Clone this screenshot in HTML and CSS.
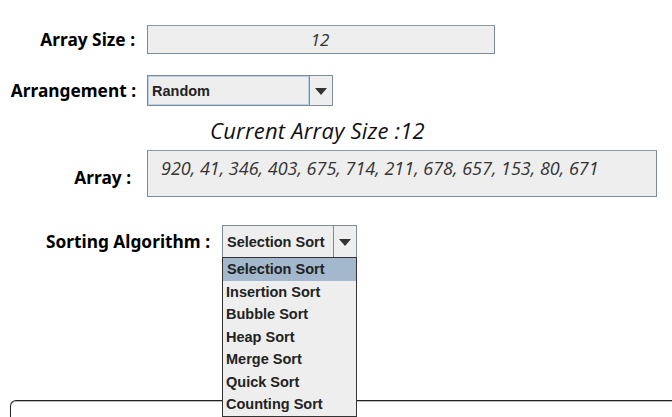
FILE: index.html
```html
<!DOCTYPE html>
<html>
<head>
<meta charset="utf-8">
<link rel="stylesheet" href="styles.css">
</head>
<body>
<div class="app">
  <div class="row row-size">
    <div class="label lbl-size">Array Size :</div>
    <div class="field size-field">12</div>
  </div>
  <div class="row row-arr">
    <div class="label lbl-arr">Arrangement :</div>
    <div class="combo combo-arr">
      <div class="combo-text focused">Random</div>
      <div class="combo-btn"><span class="tri"></span></div>
    </div>
  </div>
  <div class="current">Current Array Size :12</div>
  <div class="row row-array">
    <div class="label lbl-array">Array :</div>
    <div class="field array-field">920, 41, 346, 403, 675, 714, 211, 678, 657, 153, 80, 671</div>
  </div>
  <div class="row row-sort">
    <div class="label lbl-sort">Sorting Algorithm :</div>
    <div class="combo combo-sort">
      <div class="combo-text">Selection Sort</div>
      <div class="combo-btn"><span class="tri"></span></div>
      <ul class="list">
        <li class="sel">Selection Sort</li>
        <li>Insertion Sort</li>
        <li>Bubble Sort</li>
        <li>Heap Sort</li>
        <li>Merge Sort</li>
        <li>Quick Sort</li>
        <li>Counting Sort</li>
      </ul>
    </div>
  </div>
  <div class="panel"></div>
</div>
</body>
</html>
```

FILE: styles.css
```css
html, body {
  margin: 0;
  padding: 0;
  background: #ffffff;
  overflow: hidden;
}
.app {
  position: relative;
  width: 672px;
  height: 417px;
  padding-top: 25px;
  box-sizing: border-box;
  overflow: hidden;
  font-family: "Noto Sans", "Open Sans", sans-serif;
  color: #000;
}
.row {
  display: flex;
  align-items: center;
}
.label {
  font-weight: 700;
  font-size: 17.3px;
  text-align: right;
  white-space: nowrap;
  box-sizing: border-box;
}
.lbl-size { width: 135px; margin-right: 12px; }
.lbl-arr { width: 136px; margin-right: 11px; }
.lbl-array { width: 131px; margin-right: 16px; padding-top: 7px; }
.lbl-sort { width: 210px; margin-right: 12px; }

.field {
  background: #eeeeee;
  border: 1px solid #7a8a99;
  border-top-color: #8a99a6;
  box-sizing: border-box;
  font-family: "Open Sans", "Noto Sans", sans-serif;
  font-style: italic;
  font-size: 17px;
  color: #333;
}
.size-field {
  width: 348px;
  height: 29px;
  display: flex;
  align-items: center;
  justify-content: center;
  padding-right: 2px;
}
.row-arr { margin-top: 21px; }
.combo {
  position: relative;
  display: flex;
  background: #eeeeee;
  border: 1px solid #7a8a99;
  box-sizing: border-box;
}
.combo-arr { width: 186px; height: 31px; }
.combo-text {
  flex: 1;
  display: flex;
  align-items: center;
  padding-left: 4px;
  font-family: "Liberation Sans", Arial, sans-serif;
  font-weight: 700;
  font-size: 14.5px;
  color: #222;
  border-right: 1px solid #7a8a99;
  box-sizing: border-box;
}
.combo-text.focused {
  box-shadow: inset 0 0 0 1px #b8cfe5;
}
.combo-btn {
  width: 22px;
  display: flex;
  align-items: center;
  justify-content: center;
}
.tri {
  width: 0;
  height: 0;
  border-left: 6px solid transparent;
  border-right: 6px solid transparent;
  border-top: 7px solid #333;
  margin-top: 1px;
}
.current {
  margin: 11px 0 0 210px;
  font-family: "Open Sans", "Noto Sans", sans-serif;
  font-style: italic;
  font-size: 22px;
  letter-spacing: 0.2px;
  line-height: 26px;
  height: 33px;
  color: #111;
}
.array-field {
  width: 510px;
  height: 47px;
  padding: 6px 0 0 13px;
  font-size: 18px;
  line-height: 22px;
  white-space: nowrap;
}
.row-sort { margin-top: 28px; }
.combo-sort { width: 135px; height: 33px; }
.combo-sort .combo-text { padding-left: 4px; }
.list {
  position: absolute;
  left: -1px;
  top: 31px;
  width: 135px;
  margin: 0;
  padding: 0;
  list-style: none;
  background: #eeeeee;
  border: 1px solid #333;
  box-sizing: border-box;
  z-index: 2;
  font-family: "Liberation Sans", Arial, sans-serif;
  font-weight: 700;
  font-size: 14.5px;
  color: #222;
}
.list li {
  height: 22.5px;
  line-height: 22px;
  padding-left: 3px;
  white-space: nowrap;
}
.list li.sel {
  background: #a3b8cc;
  padding-left: 4px;
}
.panel {
  position: absolute;
  left: 10px;
  top: 400px;
  width: 680px;
  height: 60px;
  border-top: 1px solid #222;
  border-left: 1px solid #222;
  border-top-left-radius: 6px;
  box-shadow: 0 1px 0 #bdbdbd inset;
}
```
